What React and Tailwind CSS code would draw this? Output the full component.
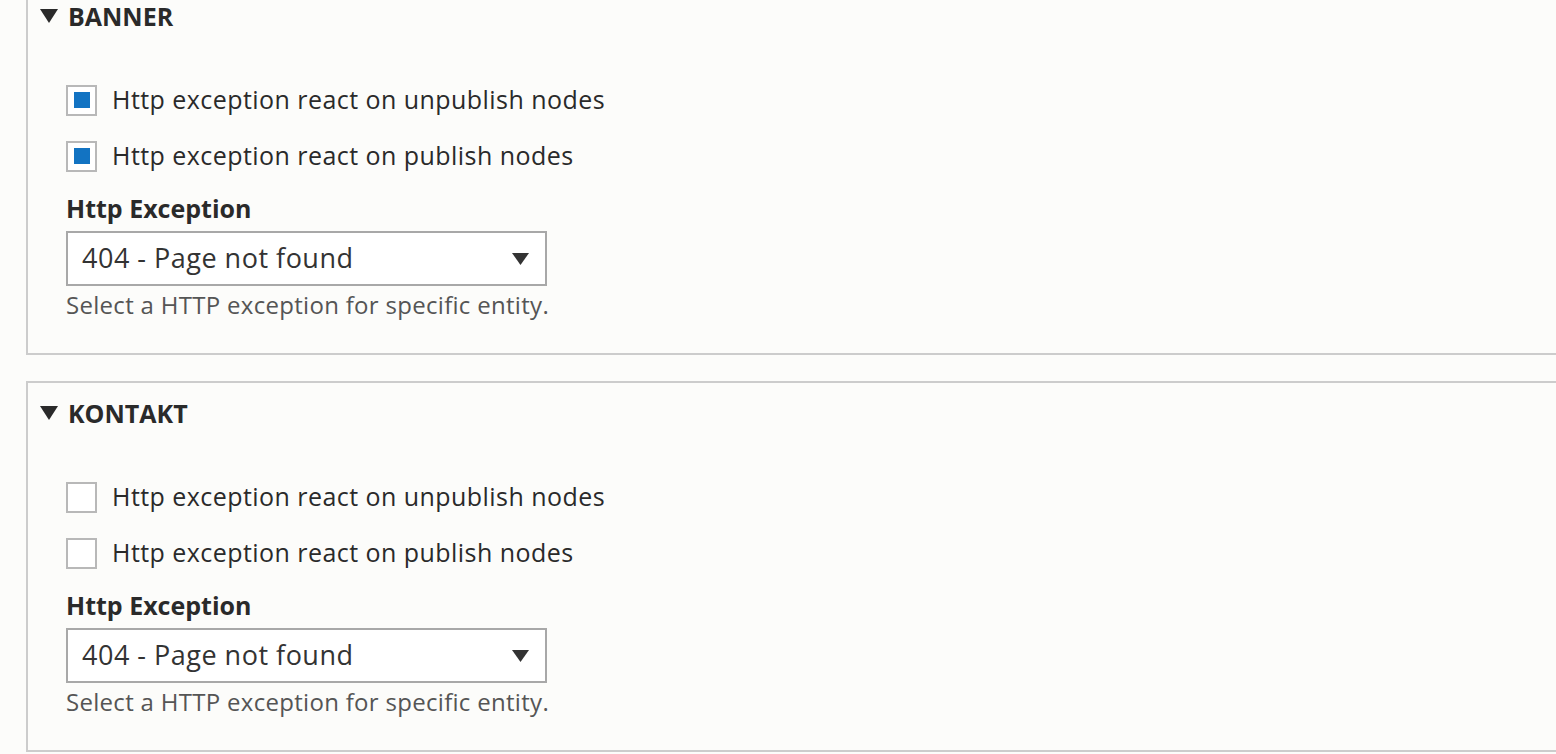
import React from "react";

const sections = [
  { id: "banner", title: "BANNER", unpublish: true, publish: true },
  { id: "kontakt", title: "KONTAKT", unpublish: false, publish: false },
];

const Checkbox = ({ checked, label }) => (
  <label className="flex items-center h-[56px]">
    <span className="w-[31px] h-[31px] border-2 border-[#b8b8b8] bg-white flex items-center justify-center shrink-0">
      {checked && <span className="w-[16px] h-[16px] bg-[#1273c2]" />}
    </span>
    <span className="ml-[15px] text-[25px] tracking-[0.45px] text-[#2a2a2a]">{label}</span>
  </label>
);

const Section = ({ section, first }) => (
  <div
    className={`ml-[26px] border-2 border-r-0 border-[#cccccc] ${first ? "border-t-0" : "mt-[26px]"}`}
  >
    {/* first fieldset is scrolled past its top edge */}
    <div className={`flex items-center pl-[12px] ${first ? "h-[46px] pb-[14px]" : "h-[60px]"}`}>
      <svg width="18" height="14" viewBox="0 0 18 14" className="shrink-0">
        <polygon points="0,0 18,0 9,14" fill="#2a2a2a" />
      </svg>
      <span className="ml-[10px] text-[25px] leading-[28px] font-bold text-[#2a2a2a]">{section.title}</span>
    </div>
    <div className="pl-[38px] pt-[26px] pb-[33px]">
      <Checkbox checked={section.unpublish} label="Http exception react on unpublish nodes" />
      <Checkbox checked={section.publish} label="Http exception react on publish nodes" />
      <div className="mt-[9px] text-[25px] font-bold text-[#2a2a2a] leading-[30px]">Http Exception</div>
      <div className="mt-[8px] w-[481px] h-[55px] border-2 border-[#a8a8a8] bg-white flex items-center justify-between pl-[14px] pr-[16px]">
        <span className="text-[27px] tracking-[0.5px] text-[#333]">404 - Page not found</span>
        <svg width="17" height="12" viewBox="0 0 17 12">
          <polygon points="0,0 17,0 8.5,12" fill="#333" />
        </svg>
      </div>
      <div className="mt-[4px] text-[24px] tracking-[0.3px] text-[#555] leading-[30px]">
        Select a HTTP exception for specific entity.
      </div>
    </div>
  </div>
);

export default function App() {
  return (
    <div className="w-[1556px] h-[754px] overflow-hidden bg-[#fcfcfa]" style={{ fontFamily: '"Open Sans", sans-serif' }}>
      {sections.map((s, i) => (
        <Section key={s.id} section={s} first={i === 0} />
      ))}
    </div>
  );
}
